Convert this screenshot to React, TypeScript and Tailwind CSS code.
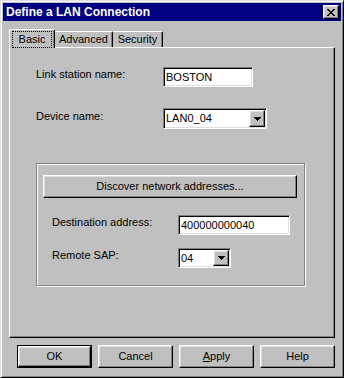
import React from 'react';

const raised =
  'border border-t-white border-l-white border-r-black border-b-black shadow-[inset_-1px_-1px_#808080,inset_1px_1px_#dfdfdf]';
const sunken =
  'border border-t-[#808080] border-l-[#808080] border-r-white border-b-white shadow-[inset_1px_1px_black,inset_-1px_-1px_#dfdfdf]';

const Arrow = () => (
  <svg width="7" height="4" viewBox="0 0 7 4" shapeRendering="crispEdges">
    <path d="M0 0h7v1h-1v1h-1v1h-1v1h-1v-1h-1v-1h-1v-1h-1z" fill="black" />
  </svg>
);

const TextBox = ({ value, className }: { value: string; className: string }) => (
  <div className={`${sunken} bg-white flex items-center pl-[2px] leading-[13px] ${className}`}>{value}</div>
);

const Combo = ({ value, className }: { value: string; className: string }) => (
  <div className={`${sunken} bg-white flex items-center justify-between p-[1px] leading-[13px] ${className}`}>
    <span className="pl-[1px]">{value}</span>
    <div className={`${raised} bg-[#c0c0c0] w-[16px] h-full flex items-center justify-center`}>
      <Arrow />
    </div>
  </div>
);

const Button = ({
  children,
  isDefault,
  width = 'w-[75px]',
}: {
  children: React.ReactNode;
  isDefault?: boolean;
  width?: string;
}) =>
  isDefault ? (
    <div className={`${width} h-[23px] border border-black`}>
      <div className={`${raised} bg-[#c0c0c0] h-full flex items-center justify-center`}>{children}</div>
    </div>
  ) : (
    <div className={`${raised} bg-[#c0c0c0] ${width} h-[23px] flex items-center justify-center whitespace-nowrap`}>
      {children}
    </div>
  );

const App: React.FC = () => {
  return (
    <div className="w-[344px] h-[378px] bg-[#c0c0c0] border border-t-[#dfdfdf] border-l-[#dfdfdf] border-r-black border-b-black shadow-[inset_1px_1px_white,inset_-1px_-1px_#808080] p-[2px] flex flex-col font-['Liberation_Sans',Arial,sans-serif] text-[11px] text-black">
      {/* title bar */}
      <div className="h-[18px] bg-[#000080] flex items-center justify-between pl-[3px] pr-[2px]">
        <span className="text-white font-bold text-[12px] leading-none">Define a LAN Connection</span>
        <div className={`${raised} bg-[#c0c0c0] w-[16px] h-[14px] flex items-center justify-center`}>
          <svg width="8" height="7" viewBox="0 0 8 7" shapeRendering="crispEdges">
            <path
              d="M0 0h2v1h-2zM6 0h2v1h-2zM1 1h2v1h-2zM5 1h2v1h-2zM2 2h4v1h-4zM3 3h2v1h-2zM2 4h4v1h-4zM1 5h2v1h-2zM5 5h2v1h-2zM0 6h2v1h-2zM6 6h2v1h-2z"
              fill="black"
            />
          </svg>
        </div>
      </div>

      <div className="px-[6px]">
        {/* tabs */}
        <div className="mt-[8px] h-[18px] flex items-end">
          <div className="relative z-10 h-[19px] -mb-[1px] w-[46px] bg-[#c0c0c0] border-l border-t border-r border-l-white border-t-white border-r-black rounded-tl-[2px] rounded-tr-[2px] shadow-[inset_-1px_0_#808080] flex items-start justify-center pt-[1px]">
            <span className="outline-1 outline-dotted outline-black -outline-offset-1 px-[7px] py-[2px] leading-[13px]">Basic</span>
          </div>
          <div className="h-[16px] w-[59px] -ml-[1px] border-l border-t border-r border-l-white border-t-white border-r-black rounded-tl-[2px] rounded-tr-[2px] shadow-[inset_-1px_0_#808080] flex items-start justify-center pt-[1px] leading-[13px]">
            Advanced
          </div>
          <div className="h-[16px] w-[50px] border-t border-r border-t-white border-r-black rounded-tr-[2px] shadow-[inset_-1px_0_#808080] flex items-start justify-center pt-[1px] leading-[13px]">
            Security
          </div>
        </div>

        {/* tab panel */}
        <div className="h-[291px] border border-t-white border-l-white border-r-black border-b-black shadow-[inset_-1px_-1px_#808080] pt-[19px] pl-[26px]">
          <div className="flex items-start">
            <div className="w-[127px] leading-[13px] pt-[1px]">Link station name:</div>
            <TextBox value="BOSTON" className="w-[90px] h-[20px]" />
          </div>
          <div className="flex items-start mt-[21px]">
            <div className="w-[127px] leading-[13px] pt-[2px]">Device name:</div>
            <Combo value="LAN0_04" className="w-[104px] h-[21px]" />
          </div>

          {/* group box */}
          <div className="mt-[34px] w-[269px] h-[123px] border border-[#808080] shadow-[inset_1px_1px_white,1px_1px_white] pt-[11px] pl-[6px]">
            <Button width="w-[254px]">Discover network addresses...</Button>
            <div className="flex items-start mt-[17px] pl-[9px]">
              <div className="w-[126px] leading-[13px] pt-[1px]">Destination address:</div>
              <TextBox value="400000000040" className="w-[112px] h-[20px]" />
            </div>
            <div className="flex items-start mt-[13px] pl-[9px]">
              <div className="w-[126px] leading-[13px] pt-[1px]">Remote SAP:</div>
              <Combo value="04" className="w-[53px] h-[20px]" />
            </div>
          </div>
        </div>

        {/* buttons */}
        <div className="mt-[7px] ml-[8px] flex gap-[6px]">
          <Button isDefault>OK</Button>
          <Button>Cancel</Button>
          <Button>
            <span>
              <span className="underline">A</span>pply
            </span>
          </Button>
          <Button>Help</Button>
        </div>
      </div>
    </div>
  );
};

export default App;
